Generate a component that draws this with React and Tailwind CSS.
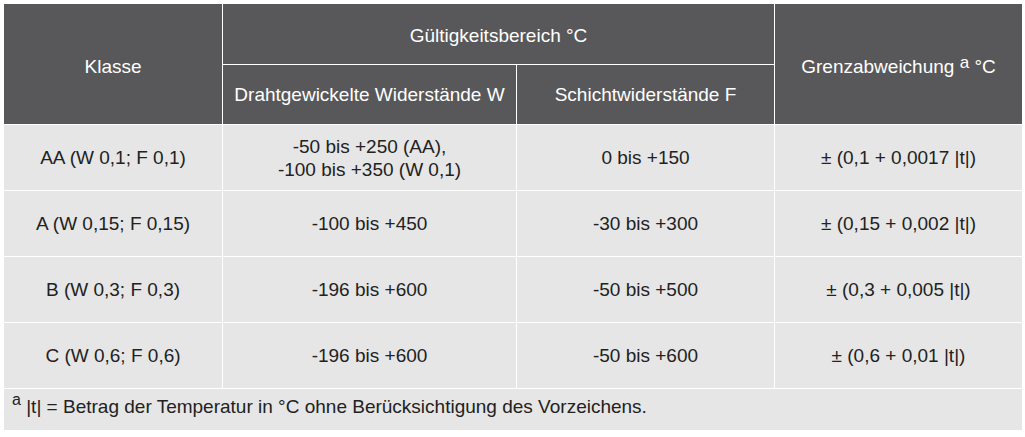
import React from 'react';

const rows = [
    { k: 'AA (W 0,1; F 0,1)', w: ['-50 bis +250 (AA),', '-100 bis +350 (W 0,1)'], f: '0 bis +150', g: '± (0,1 + 0,0017 |t|)' },
    { k: 'A (W 0,15; F 0,15)', w: ['-100 bis +450'], f: '-30 bis +300', g: '± (0,15 + 0,002 |t|)' },
    { k: 'B (W 0,3; F 0,3)', w: ['-196 bis +600'], f: '-50 bis +500', g: '± (0,3 + 0,005 |t|)' },
    { k: 'C (W 0,6; F 0,6)', w: ['-196 bis +600'], f: '-50 bis +600', g: '± (0,6 + 0,01 |t|)' },
];

const App = () => {
    return (
        <div className="bg-white p-[3px] w-[1025px] h-[437px]" style={{ fontFamily: '"Liberation Sans", Arial, sans-serif' }}>
            <table className="border-collapse w-[1019px] table-fixed text-[19px] leading-[23px]">
                <colgroup>
                    <col className="w-[219px]" />
                    <col className="w-[294px]" />
                    <col className="w-[258px]" />
                    <col className="w-[248px]" />
                </colgroup>
                <thead className="bg-[#58585a] text-white">
                    <tr className="h-[61px]">
                        <th rowSpan={2} className="border border-white font-normal text-center pt-[4px]">Klasse</th>
                        <th colSpan={2} className="border border-white font-normal text-center pt-[2px]">Gültigkeitsbereich °C</th>
                        <th rowSpan={2} className="border border-white font-normal text-center pt-[4px]">
                            Grenzabweichung <sup className="text-[17px] relative -top-[5px]">a</sup> °C
                        </th>
                    </tr>
                    <tr className="h-[60px]">
                        <th className="border border-white font-normal text-center">Drahtgewickelte Widerstände W</th>
                        <th className="border border-white font-normal text-center">Schichtwiderstände F</th>
                    </tr>
                </thead>
                <tbody className="bg-[#e6e6e6] text-[#222]">
                    {rows.map((r) => (
                        <tr key={r.k} className="h-[66px]">
                            <td className="border border-white text-center">{r.k}</td>
                            <td className="border border-white text-center">
                                {r.w.map((line) => (
                                    <div key={line}>{line}</div>
                                ))}
                            </td>
                            <td className="border border-white text-center">{r.f}</td>
                            <td className="border border-white text-center">{r.g}</td>
                        </tr>
                    ))}
                    <tr className="h-[42px]">
                        <td colSpan={4} className="border border-white px-[8px] align-top pt-[6px]">
                            <sup className="text-[16px]">a</sup> |t| = Betrag der Temperatur in °C ohne Berücksichtigung des Vorzeichens.
                        </td>
                    </tr>
                </tbody>
            </table>
        </div>
    );
};

export default App;
